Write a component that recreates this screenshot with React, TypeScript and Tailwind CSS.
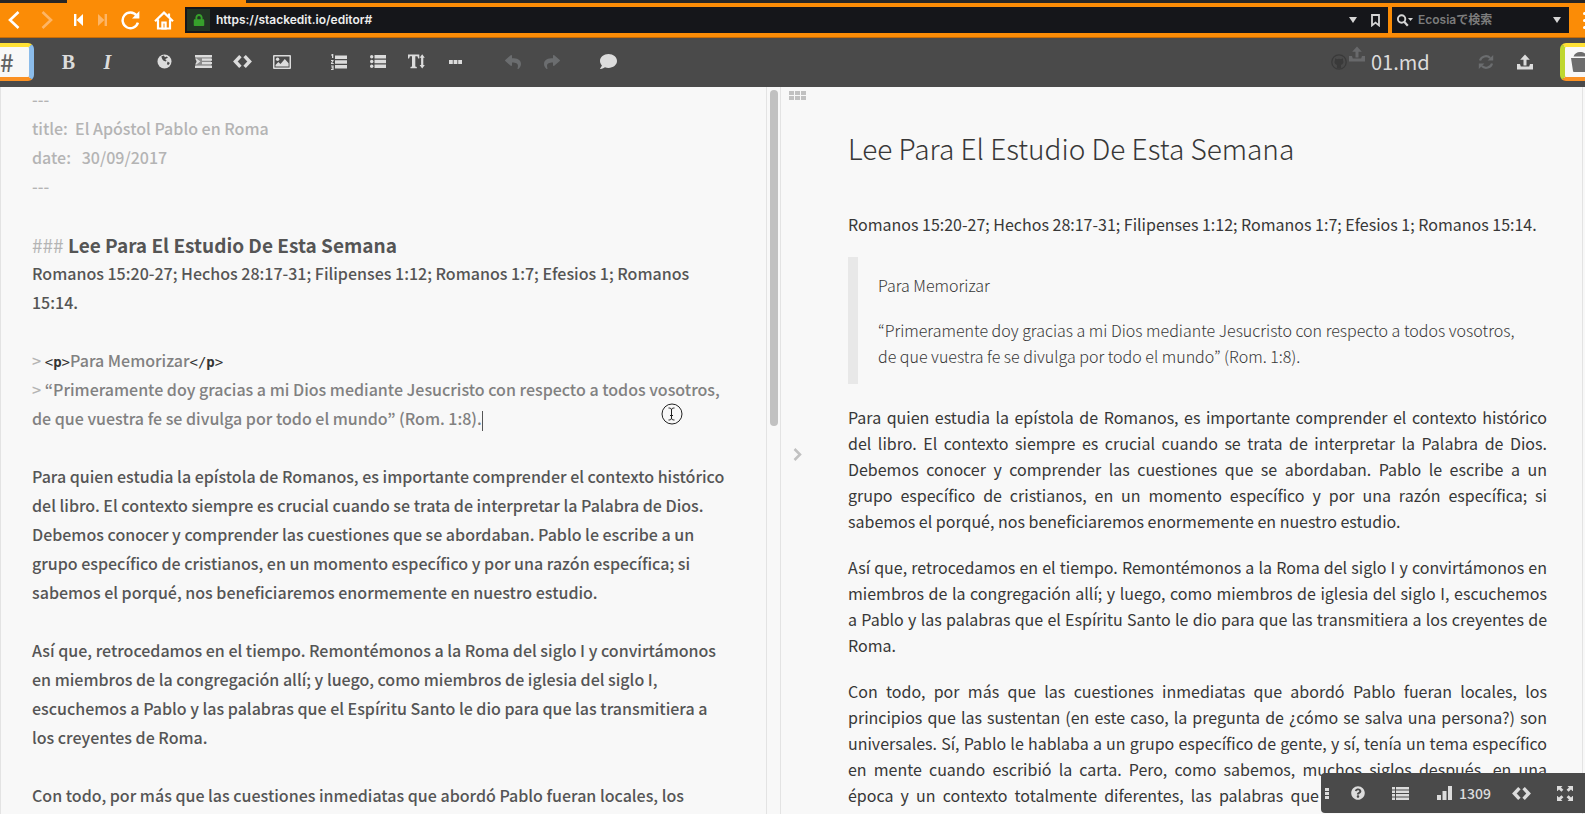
import type { ReactNode } from "react";
import { FaComment, FaLock, FaQuestionCircle, FaReply, FaShare } from "react-icons/fa";

const TEXT_FONT = "font-['Noto_Sans_CJK_JP','Noto_Sans',sans-serif]";

function ToolButton({ label, dim, children }: { label: string; dim?: boolean; children: ReactNode }) {
  return (
    <button
      type="button"
      aria-label={label}
      disabled={dim}
      className={`flex h-8 w-[39px] shrink-0 items-center justify-center ${dim ? "text-[#6b6d6f]" : "text-[#dcdcdc]"}`}
    >
      {children}
    </button>
  );
}

function Globe() {
  return (
    <svg width="15" height="15" viewBox="0 0 15 15" fill="currentColor">
      <circle cx="7.5" cy="7.5" r="7" />
      <path
        d="M4.300 2.600l2.600-1 1 1.600 1.800-.8 1.300 1.300-2.200 1-.4 1.300 1.300.5-.9 1.100-2.200-.8-1.300-1.500zM10.600 7.600l2.300 1.300-1.500 2.100-1.500-.8z"
        fill="#4a4a4a"
      />
    </svg>
  );
}

function Indent() {
  return (
    <svg width="17" height="13" viewBox="0 0 17 13" fill="currentColor">
      <path d="M0 0h17v2.400H0zM0 10.600h17V13H0zM7 3.600h10v2.200H7zM7 7h10v2.200H7zM0 3.400h1.400L5.400 6.500 1.400 9.600H0l2-3.100z" />
      <path d="M1 2.400h15v8.200H1z" opacity=".45" />
    </svg>
  );
}

function Code() {
  return (
    <svg width="19" height="13" viewBox="0 0 19 13" fill="none" stroke="currentColor" strokeWidth="3.400">
      <path d="M7.400 1.200L2.400 6.500l5 5.300M11.600 1.200l5 5.300-5 5.300" />
    </svg>
  );
}

function Picture() {
  return (
    <svg width="18" height="14" viewBox="0 0 18 14" fill="currentColor">
      <path fillRule="evenodd" d="M1 0h16a1 1 0 011 1v12a1 1 0 01-1 1H1a1 1 0 01-1-1V1a1 1 0 011-1zm.5 1.500v11h15v-11z" />
      <circle cx="4.600" cy="4.200" r="1.700" />
      <path d="M2.500 11.600V10l2.800-3 2.200 2 4.300-5 3.800 4.200v3.400z" />
    </svg>
  );
}

function NumberedList() {
  return (
    <svg width="16" height="16" viewBox="0 0 16 16" fill="currentColor">
      <path d="M4 1.500h12v3.500H4zM4 6.300h12v3.500H4zM4 11h12v3.500H4z" />
      <path d="M1 0h1.300v4H1zM0 .600h1.500v1H0zM0 6h2.600v1H0zM1.200 7l1.300.3L1.200 9h1.500v1H0V9zM0 11.500h2.600V16H0v-1h1.400v-.8H.500v-.9h.9v-.8H0z" />
    </svg>
  );
}

function BulletList() {
  return (
    <svg width="16" height="13" viewBox="0 0 16 13" fill="currentColor">
      <path d="M4.500 0H16v3.500H4.500zM4.500 4.750H16v3.500H4.500zM4.500 9.500H16V13H4.500z" />
      <circle cx="1.700" cy="1.750" r="1.700" />
      <circle cx="1.700" cy="6.500" r="1.700" />
      <circle cx="1.700" cy="11.250" r="1.700" />
    </svg>
  );
}

function TextHeight() {
  return (
    <svg width="17" height="15" viewBox="0 0 17 15" fill="currentColor">
      <path d="M0 .500h11.300v3.900h-1.100L9.400 2.200H7.300v10.400l1.500.500v1.100H2.500v-1.100l1.500-.500V2.200H1.900l-.8 2.200H0zM14.200.300l2.600 3.500h-1.500v7.200h1.500l-2.600 3.500-2.600-3.500h1.500V3.800h-1.500z" />
    </svg>
  );
}

function Upload() {
  return (
    <svg width="16" height="16" viewBox="0 0 16 16" fill="currentColor">
      <path d="M8 .500l4.800 5.300H9.500v5.700h-3V5.800H3.200z" />
      <path d="M0 10h3l.8 2.600h8.400L13 10h3v5.500H0z" />
    </svg>
  );
}

function Refresh() {
  return (
    <svg width="16" height="14" viewBox="0 0 16 14">
      <path d="M2 5.600A6 5.600 0 0112.200 3M14 8.400A6 5.600 0 013.800 11" fill="none" stroke="currentColor" strokeWidth="2.200" />
      <path d="M15.200 0v5.600H9.600zM.8 14V8.400h5.600z" fill="currentColor" />
    </svg>
  );
}

function GithubCircle() {
  return (
    <svg width="16" height="16" viewBox="0 0 16 16">
      <circle cx="8" cy="8" r="7.200" fill="none" stroke="currentColor" strokeWidth="1.300" />
      <path
        d="M4.200 4.200l1.800 1a6 6 0 014 0l1.800-1 .3 2.400c1 2-.1 4-2.200 4.400l.3 3.500H5.800L6 11c-2.100-.4-3.200-2.400-2.100-4.400z"
        fill="currentColor"
      />
    </svg>
  );
}

function Triangle() {
  return (
    <svg width="8" height="6" viewBox="0 0 8 6" fill="currentColor">
      <path d="M0 0h8L4 6z" />
    </svg>
  );
}

function BrowserBar() {
  return (
    <header className="flex shrink-0 flex-col border-b border-[#c66c08] bg-[#fb8c06] text-white">
      <div className="flex h-[3px] bg-[#262626]">
        <span className="ml-[67px] w-[179px] bg-[#fb8c06]" />
      </div>
      <nav className="flex h-[34px] items-center">
        <button type="button" aria-label="Back" className="flex w-[28px] justify-center">
          <svg width="12" height="18" viewBox="0 0 12 18" fill="none" stroke="currentColor" strokeWidth="2.600">
            <path d="M10.500 1L2 9l8.500 8" />
          </svg>
        </button>
        <button type="button" aria-label="Forward" className="flex w-[38px] justify-center text-[#fdb565]">
          <svg width="12" height="18" viewBox="0 0 12 18" fill="none" stroke="currentColor" strokeWidth="2.600">
            <path d="M1.500 1L10 9l-8.500 8" />
          </svg>
        </button>
        <button type="button" aria-label="Rewind" className="flex w-6 justify-center">
          <svg width="9" height="12" viewBox="0 0 9 12" fill="currentColor">
            <path d="M0 0h2.400v12H0zM9 0v12L2.600 6z" />
          </svg>
        </button>
        <button type="button" aria-label="Fast forward" className="flex w-6 justify-center text-[#fdb565]">
          <svg width="9" height="12" viewBox="0 0 9 12" fill="currentColor">
            <path d="M6.600 0H9v12H6.600zM0 0l6.400 6L0 12z" />
          </svg>
        </button>
        <button type="button" aria-label="Reload" className="flex w-[33px] justify-center">
          <svg width="19" height="19" viewBox="0 0 19 19">
            <path d="M15.600 4.600A7.800 7.800 0 1016.900 11.600" fill="none" stroke="currentColor" strokeWidth="2.400" />
            <path d="M18.400 0v7.400H11z" fill="currentColor" />
          </svg>
        </button>
        <button type="button" aria-label="Home" className="flex w-[34px] justify-center">
          <svg width="20" height="19" viewBox="0 0 20 19" fill="none" stroke="currentColor" strokeWidth="2.200">
            <path d="M1 10.200L10 1.600l9 8.600M4 8.500v9h12v-9" />
            <path d="M8.400 17.500v-6h3.200v6z" fill="#fb8c06" />
            <path d="M15 2.500v4" />
          </svg>
        </button>
        <div className="ml-1 flex h-[26px] min-w-0 flex-1 items-center bg-[#15161a] pr-2 pl-0.5">
          <span className="flex h-[22px] w-[23px] items-center justify-center bg-[#233524] text-[#36a12b]">
            <FaLock size={12} />
          </span>
          <input
            aria-label="Address"
            defaultValue="https://stackedit.io/editor#"
            className="min-w-0 flex-1 bg-transparent pl-1.5 font-['Inter',sans-serif] text-xs font-semibold text-[#eeeeee] outline-none"
          />
          <button type="button" aria-label="History" className="mr-[14px] text-[#d6d6d6]">
            <Triangle />
          </button>
          <button type="button" aria-label="Bookmark" className="text-[#d6d6d6]">
            <svg width="9" height="13" viewBox="0 0 9 13" fill="none" stroke="currentColor" strokeWidth="1.800">
              <path d="M1 1h7v10.400L4.500 8.600 1 11.400z" />
            </svg>
          </button>
        </div>
        <div className="ml-1 flex h-[26px] w-[177px] items-center bg-[#15161a] pr-2 pl-1">
          <button type="button" aria-label="Search engine" className="flex items-center text-[#d6d6d6]">
            <svg width="18" height="13" viewBox="0 0 18 13">
              <circle cx="5.600" cy="5" r="3.700" fill="none" stroke="currentColor" strokeWidth="1.900" />
              <path d="M8.200 7.800l3.600 4" stroke="currentColor" strokeWidth="2.200" />
              <path d="M12 4h5l-2.500 3z" fill="currentColor" />
            </svg>
          </button>
          <input
            aria-label="Search"
            placeholder="Ecosiaで検索"
            className="min-w-0 flex-1 bg-transparent pl-1 font-['Inter','Noto_Sans_CJK_JP',sans-serif] text-xs font-semibold outline-none placeholder:text-[#7c7c7c]"
          />
          <button type="button" aria-label="Search options" className="text-[#d6d6d6]">
            <Triangle />
          </button>
        </div>
        <button type="button" aria-label="Menu" className="ml-3.5 flex w-0.5 flex-col gap-1">
          <span className="size-[3px] rounded-full bg-white" />
          <span className="size-[3px] rounded-full bg-white" />
          <span className="size-[3px] rounded-full bg-white" />
        </button>
      </nav>
    </header>
  );
}

function Toolbar() {
  return (
    <div className="flex h-[49px] shrink-0 items-center overflow-hidden bg-[#4a4a4a] pb-0.5">
      <button
        type="button"
        aria-label="Menu"
        className={`${TEXT_FONT} flex h-[38px] w-[34px] shrink-0 items-center rounded-r-md border-y-4 border-r-[5px] border-t-[#ffe135] border-r-[#8bbcea] border-b-[#fb9123] bg-[#f8f8f8] text-2xl font-medium text-[#626262]`}
      >
        #
      </button>
      <div className="ml-[15px] flex gap-[18px]">
        <div className="flex">
          <ToolButton label="Bold">
            <span className="font-['Liberation_Serif',serif] text-xl font-bold">B</span>
          </ToolButton>
          <ToolButton label="Italic">
            <span className="font-['Liberation_Serif',serif] text-xl font-bold italic">I</span>
          </ToolButton>
        </div>
        <div className="flex">
          <ToolButton label="Link"><Globe /></ToolButton>
          <ToolButton label="Blockquote"><Indent /></ToolButton>
          <ToolButton label="Code"><Code /></ToolButton>
          <ToolButton label="Image"><Picture /></ToolButton>
        </div>
        <div className="flex">
          <ToolButton label="Numbered list"><NumberedList /></ToolButton>
          <ToolButton label="Bullet list"><BulletList /></ToolButton>
          <ToolButton label="Heading"><TextHeight /></ToolButton>
          <ToolButton label="Horizontal rule">
            <svg width="13" height="4" viewBox="0 0 13 4" fill="currentColor">
              <path d="M0 0h3.800v4H0zM4.600 0h3.800v4H4.600zM9.200 0H13v4H9.200z" />
            </svg>
          </ToolButton>
        </div>
        <div className="flex">
          <ToolButton label="Undo" dim><FaReply size={16} /></ToolButton>
          <ToolButton label="Redo" dim><FaShare size={16} /></ToolButton>
        </div>
        <ToolButton label="Comments"><FaComment size={17} /></ToolButton>
      </div>
      <div className="ml-auto flex items-center">
        <span className="text-[#3a3a3a]"><GithubCircle /></span>
        <span className="mb-4 ml-0.5 text-[#68696b]"><Upload /></span>
        <a
          href="#"
          className={`${TEXT_FONT} ml-1.5 w-[95px] text-[20px] leading-8 text-[#dcdcdc]`}
        >
          01.md
        </a>
        <ToolButton label="Synchronize" dim><Refresh /></ToolButton>
        <ToolButton label="Publish"><Upload /></ToolButton>
        <button
          type="button"
          aria-label="Documents"
          className="ml-4 flex h-[38px] w-[25px] items-center overflow-hidden rounded-l-md border-y-4 border-l-[5px] border-t-[#ffe135] border-b-[#fb9123] border-l-[#bfd72f] bg-[#f8f8f8] pl-1.5 text-[#6d6d6d]"
        >
          <svg width="22" height="20" viewBox="0 0 22 20" fill="currentColor" className="shrink-0">
            <path d="M2.500 4.500C3.500 1.500 6 0 9 0s6 1.500 8 4.500zM0 6h22l-2 13a1 1 0 01-1 1H3a1 1 0 01-1-1z" />
          </svg>
        </button>
      </div>
    </div>
  );
}

function Tag({ children }: { children: ReactNode }) {
  return (
    <span className="font-['DejaVu_Sans_Mono',monospace] text-[14px] leading-none text-[#333333]">{children}</span>
  );
}

function Editor() {
  return (
    <section className="relative flex min-w-0 flex-1 overflow-hidden border-x border-[#e3e3e3]">
      <div className="min-w-0 flex-1 border-r border-[#e3e3e3]">
        <div
          role="textbox"
          aria-label="Markdown"
          aria-multiline="true"
          className={`${TEXT_FONT} -mt-0.5 pl-[31px] text-[16px] leading-[29px] font-medium whitespace-pre text-[#555555]`}
        >
          <p className="text-[#b4b4b4]">{"---\ntitle:  El Apóstol Pablo en Roma\ndate:   30/09/2017\n---\n "}</p>
          <h3 className="text-[19px] leading-[29px] font-bold">
            <span className="font-normal text-[#b4b4b4]">###</span> Lee Para El Estudio De Esta Semana
          </h3>
          <p>{"Romanos 15:20-27; Hechos 28:17-31; Filipenses 1:12; Romanos 1:7; Efesios 1; Romanos\n15:14.\n "}</p>
          <p className="text-[#818181]">
            <span className="text-[#b4b4b4]">&gt; </span>
            <Tag>&lt;<b>p</b>&gt;</Tag>Para Memorizar<Tag>&lt;/<b>p</b>&gt;</Tag>
            {"\n"}
            <span className="text-[#b4b4b4]">&gt; </span>
            {"“Primeramente doy gracias a mi Dios mediante Jesucristo con respecto a todos vosotros,\nde que vuestra fe se divulga por todo el mundo” (Rom. 1:8)."}
            <span className="inline-block h-5 w-px bg-[#555555] align-middle" />
            {"\n "}
          </p>
          <p>
            {"Para quien estudia la epístola de Romanos, es importante comprender el contexto histórico\ndel libro. El contexto siempre es crucial cuando se trata de interpretar la Palabra de Dios.\nDebemos conocer y comprender las cuestiones que se abordaban. Pablo le escribe a un\ngrupo específico de cristianos, en un momento específico y por una razón específica; si\nsabemos el porqué, nos beneficiaremos enormemente en nuestro estudio.\n "}
          </p>
          <p>
            {"Así que, retrocedamos en el tiempo. Remontémonos a la Roma del siglo I y convirtámonos\nen miembros de la congregación allí; y luego, como miembros de iglesia del siglo I,\nescuchemos a Pablo y las palabras que el Espíritu Santo le dio para que las transmitiera a\nlos creyentes de Roma.\n "}
          </p>
          <p>{"Con todo, por más que las cuestiones inmediatas que abordó Pablo fueran locales, los"}</p>
        </div>
      </div>
      <div className="w-[13px] shrink-0 pt-[3px] pl-[3px]">
        <div className="h-[336px] w-2 rounded-full bg-[#c1c1c1]" />
      </div>
      <svg
        width="22"
        height="22"
        viewBox="0 0 22 22"
        fill="none"
        stroke="#222222"
        className="absolute top-[316px] left-[660px]"
      >
        <circle cx="11" cy="11" r="10" />
        <path d="M7.500 5c2 0 3 .500 3 2v8c0 1.500-1 2-3 2M13.500 5c-2 0-3 .500-3 2M13.500 17c-2 0-3-.500-3-2M9 12.500h3" />
      </svg>
    </section>
  );
}

function Preview() {
  return (
    <section className="min-w-0 flex-1 overflow-hidden pr-[2px]">
      <article
        className={`${TEXT_FONT} flex min-h-full flex-col gap-5 border-r border-[#e3e3e3] pt-[41px] pr-[35px] pl-11 text-justify text-[16px] leading-[26px] text-[#373737]`}
      >
        <h3 className="mb-[23px] text-[28px] leading-10 font-light">Lee Para El Estudio De Esta Semana</h3>
        <p>Romanos 15:20-27; Hechos 28:17-31; Filipenses 1:12; Romanos 1:7; Efesios 1; Romanos 15:14.</p>
        <blockquote className="flex flex-col gap-[19px] border-l-[10px] border-[#e8e8e8] py-[15px] pl-5 text-left font-light">
          <p>Para Memorizar</p>
          <p>
            “Primeramente doy gracias a mi Dios mediante Jesucristo con respecto a todos vosotros, de&nbsp;que vuestra
            fe se divulga por todo el mundo” (Rom. 1:8).
          </p>
        </blockquote>
        <p>
          Para quien estudia la epístola de Romanos, es importante comprender el contexto histórico del libro. El
          contexto siempre es crucial cuando se trata de interpretar la Palabra de Dios. Debemos conocer y comprender
          las cuestiones que se abordaban. Pablo le escribe a un grupo&nbsp;específico de cristianos, en un momento
          específico y por una razón específica; si sabemos&nbsp;el&nbsp;porqué, nos beneficiaremos enormemente en
          nuestro estudio.
        </p>
        <p>
          Así que, retrocedamos en el tiempo. Remontémonos a la Roma del siglo I y convirtámonos en miembros de la
          congregación allí; y luego, como miembros de iglesia del siglo I, escuchemos a&nbsp;Pablo y las palabras que
          el Espíritu Santo le dio para que las transmitiera a los creyentes de Roma.
        </p>
        <p>
          Con todo, por más que las cuestiones inmediatas que abordó Pablo fueran locales, los principios que las
          sustentan (en este caso, la pregunta de ¿cómo se salva una persona?) son universales. Sí, Pablo le hablaba a
          un grupo específico de gente, y sí, tenía un tema específico en mente cuando escribió la carta. Pero, como
          sabemos, muchos siglos después, en una época y un contexto totalmente diferentes, las palabras que escribió
          siguen siendo útiles para&nbsp;nosotros.
        </p>
      </article>
    </section>
  );
}

function StatusPanel() {
  return (
    <div className="absolute right-0 bottom-px flex h-10 w-[264px] items-center rounded-l bg-[#4a4a4a] text-[#dcdcdc]">
      <span className="ml-1 flex w-[5px] flex-col gap-px">
        <i className="h-[3px] w-1 bg-[#dcdcdc]" />
        <i className="h-[3px] w-1 bg-[#dcdcdc]" />
        <i className="h-[3px] w-1 bg-[#dcdcdc]" />
      </span>
      <button type="button" aria-label="Help" className="ml-5 flex w-4 justify-center">
        <FaQuestionCircle size={14} />
      </button>
      <button type="button" aria-label="Contents" className="ml-[26px]">
        <svg width="17" height="13" viewBox="0 0 17 13" fill="currentColor">
          <path d="M0 0h3v2.500H0zM0 3.500h3V6H0zM0 7h3v2.500H0zM0 10.500h3V13H0zM4 0h13v2.500H4zM4 3.500h13V6H4zM4 7h13v2.500H4zM4 10.500h13V13H4z" />
        </svg>
      </button>
      <button
        type="button"
        aria-label="Statistics"
        className={`${TEXT_FONT} ml-7 flex w-[57px] items-center gap-[7px] text-[14px] font-medium`}
      >
        <svg width="15" height="14" viewBox="0 0 15 14" fill="currentColor" className="shrink-0">
          <path d="M0 9h4v5H0zM5.500 5h4v9h-4zM11 0h4v14h-4z" />
        </svg>
        1309
      </button>
      <button type="button" aria-label="HTML code" className="ml-[18px]">
        <Code />
      </button>
      <button type="button" aria-label="Full screen" className="ml-[26px]">
        <svg width="16" height="15" viewBox="0 0 16 15" fill="currentColor">
          <path d="M0 0h5.500L4 1.600l2.400 2.200-2 1.900L2 3.500.500 5H0zM16 0h-5.500L12 1.600 9.600 3.800l2 1.900L14 3.500 15.500 5h.5zM0 15h5.500L4 13.400l2.400-2.200-2-1.900L2 11.500.500 10H0zM16 15h-5.500l1.500-1.600-2.400-2.200 2-1.900 2.400 2.200 1.500-1.500h.5z" />
        </svg>
      </button>
    </div>
  );
}

export default function App() {
  return (
    <div className="relative flex h-screen flex-col overflow-hidden bg-[#f8f8f8]">
      <BrowserBar />
      <Toolbar />
      <main className="flex min-h-0 flex-1">
        <Editor />
        <div className="flex w-[23px] shrink-0 flex-col pt-1 pl-2 text-[#c1c1c1]">
          <button type="button" aria-label="Table mode">
            <svg width="17" height="9" viewBox="0 0 17 9" fill="currentColor">
              <path d="M0 0h5v4H0zM6 0h5v4H6zM12 0h5v4h-5zM0 5h5v4H0zM6 5h5v4H6zM12 5h5v4h-5z" />
            </svg>
          </button>
          <button type="button" aria-label="Toggle preview" className="my-auto pb-1.5 pl-1">
            <svg width="9" height="13" viewBox="0 0 9 13" fill="none" stroke="currentColor" strokeWidth="2.500">
              <path d="M1.500 1l5.500 5.500L1.500 12" />
            </svg>
          </button>
        </div>
        <Preview />
      </main>
      <StatusPanel />
    </div>
  );
}
